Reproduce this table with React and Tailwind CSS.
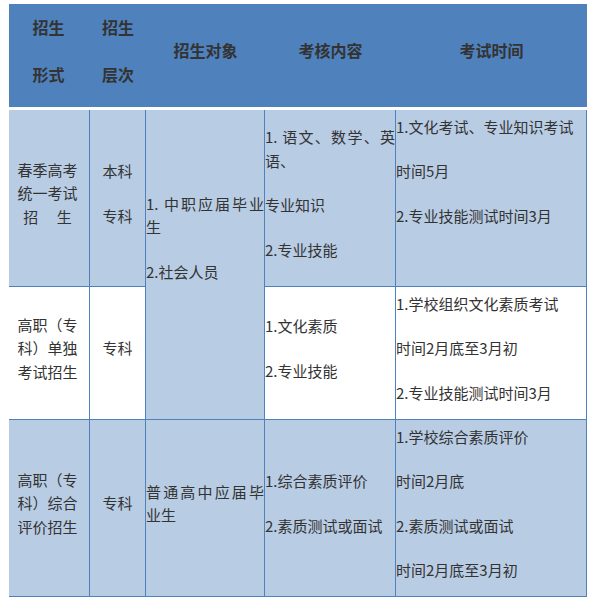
const cols = "grid grid-cols-[81px_56px_119px_131px_191px]";

function Cell({ className = "", children }) {
  return (
    <div className={`flex flex-col justify-center gap-[21px] border-r border-b border-[#4f81bd] pb-[10px] text-[15px] leading-[23.5px] ${className}`}>
      {children}
    </div>
  );
}

function Empty() {
  return <p className="h-[23.5px]" />;
}

export default function App() {
  return (
    <div
      className="min-h-[604px] bg-white pt-[4px] pl-[9px] text-[#333333]"
      style={{ fontFamily: '"Noto Sans CJK SC", "Noto Sans", sans-serif' }}
    >
      <div className={`${cols} h-[103px] w-[578px] bg-[#4f81bd] text-[16px] font-bold leading-[25.6px]`}>
        <div className="flex flex-col items-center justify-center gap-[21px] pb-[9px] pr-[2px]">
          <p>招生</p>
          <p>形式</p>
        </div>
        <div className="flex flex-col items-center justify-center gap-[21px] pb-[9px]">
          <p>招生</p>
          <p>层次</p>
        </div>
        <div className="flex items-center justify-center pb-[9px]">招生对象</div>
        <div className="flex items-center justify-center pb-[9px]">考核内容</div>
        <div className="flex items-center justify-center pb-[9px]">考试时间</div>
      </div>

      <div className={`${cols} mt-[3px] w-[578px] grid-rows-[177px_133px_177px]`}>
        {/* row 1 */}
        <Cell className="bg-[#b8cce4] pl-[3px] pr-[6px] text-center">
          <p>春季高考统一考试招　 生</p>
        </Cell>
        <Cell className="bg-[#b8cce4] items-center">
          <p>本科</p>
          <p>专科</p>
        </Cell>
        <Cell className="row-span-2 bg-[#b8cce4] text-justify">
          <p>1. 中职应届毕业生</p>
          <p>2.社会人员</p>
          <Empty />
        </Cell>
        <Cell className="bg-[#b8cce4] text-justify">
          <p>1. 语文、数学、英语、</p>
          <p>专业知识</p>
          <p>2.专业技能</p>
        </Cell>
        <Cell className="bg-[#b8cce4]">
          <p>1.文化考试、专业知识考试</p>
          <p>时间5月</p>
          <p>2.专业技能测试时间3月</p>
          <Empty />
        </Cell>

        {/* row 2 */}
        <Cell className="bg-white pl-[3px] pr-[6px] text-center">
          <p>高职（专科）单独考试招生</p>
        </Cell>
        <Cell className="bg-white items-center">
          <p>专科</p>
        </Cell>
        <Cell className="bg-white">
          <p>1.文化素质</p>
          <p>2.专业技能</p>
        </Cell>
        <Cell className="bg-white">
          <p>1.学校组织文化素质考试</p>
          <p>时间2月底至3月初</p>
          <p>2.专业技能测试时间3月</p>
        </Cell>

        {/* row 3 */}
        <Cell className="bg-[#b8cce4] pl-[3px] pr-[6px] text-center">
          <p>高职（专科）综合评价招生</p>
        </Cell>
        <Cell className="bg-[#b8cce4] items-center">
          <p>专科</p>
        </Cell>
        <Cell className="bg-[#b8cce4] text-justify">
          <p>普通高中应届毕业生</p>
        </Cell>
        <Cell className="bg-[#b8cce4]">
          <p>1.综合素质评价</p>
          <p>2.素质测试或面试</p>
        </Cell>
        <Cell className="bg-[#b8cce4]">
          <p>1.学校综合素质评价</p>
          <p>时间2月底</p>
          <p>2.素质测试或面试</p>
          <p>时间2月底至3月初</p>
        </Cell>
      </div>
    </div>
  );
}
